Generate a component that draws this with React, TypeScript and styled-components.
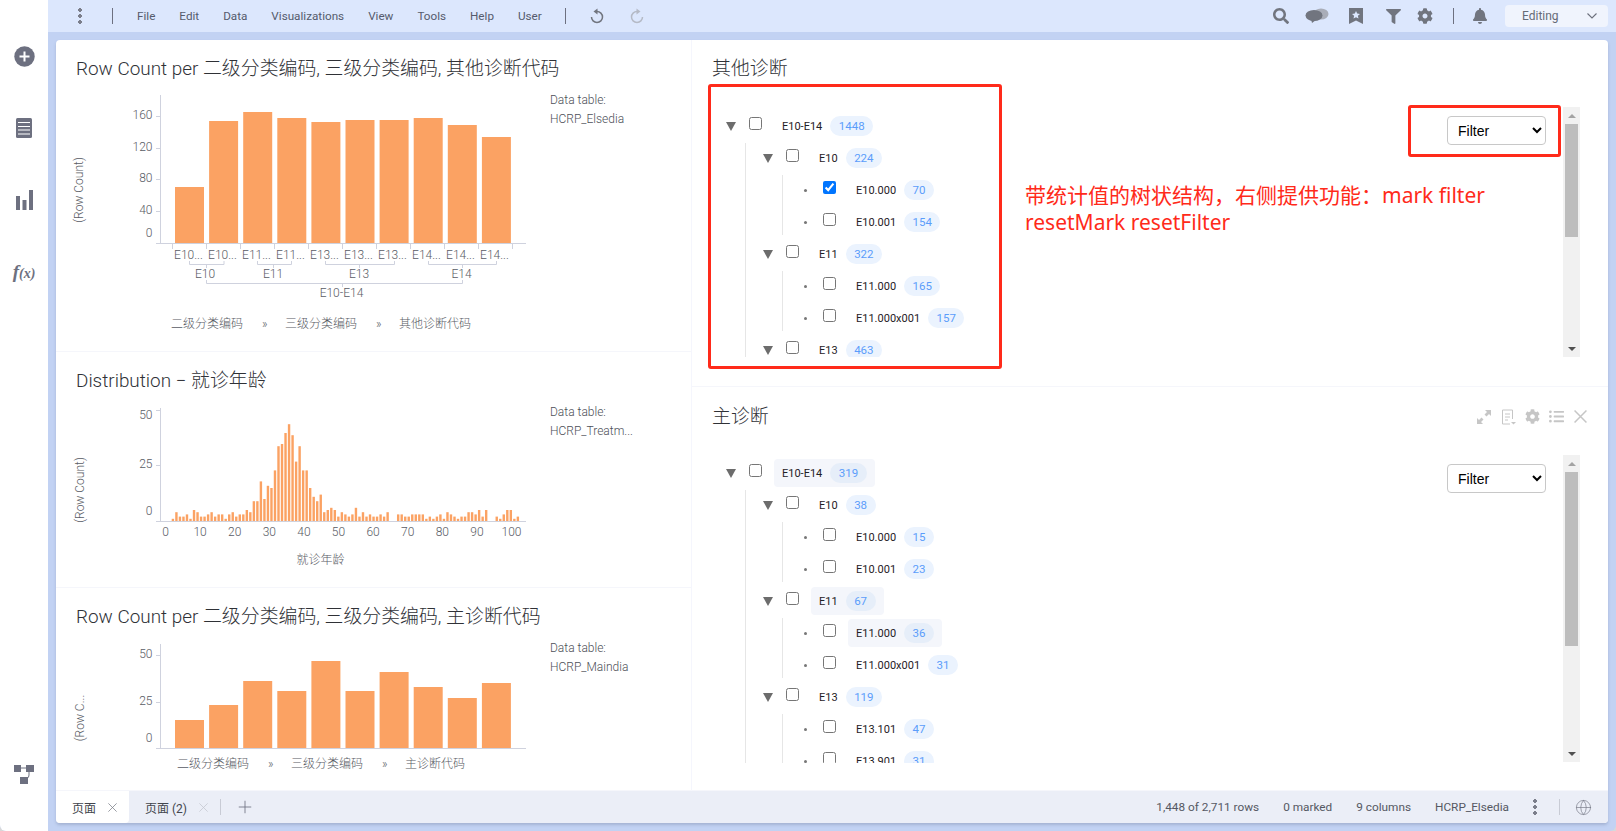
import React from "react";
import styled, { createGlobalStyle } from "styled-components";
import { FaSearch, FaFilter, FaCog, FaBell, FaListUl } from "react-icons/fa";
import { Globe, Plus } from "lucide-react";

const FONT = `Roboto, "Noto Sans CJK SC", sans-serif`;
const BAR = "#fba263";
const AXIS = "#cfd2de";

const Global = createGlobalStyle`
  html, body { margin: 0; padding: 0; height: 100%; overflow: hidden; }
  body { font-family: ${FONT}; background: #d8d8d8; }
  * { box-sizing: border-box; }
`;

const Shell = styled.div`
  display: grid;
  grid-template-columns: 48px 1fr;
  width: 1616px;
  height: 831px;
  background: #c2d2f3;
  border-radius: 0 0 6px 6px;
  overflow: hidden;
`;

const Rail = styled.nav`
  display: flex;
  flex-direction: column;
  align-items: center;
  gap: 50px;
  padding: 45px 0 46px;
  background: #fff;
  color: #6d7080;
`;

const RailIcon = styled.div`
  width: 22px;
  height: 22px;
  display: flex;
  align-items: center;
  justify-content: center;
`;

const RailBottom = styled(RailIcon)`
  margin-top: auto;
`;

const FxLabel = styled.span`
  font: italic 700 19px "Liberation Serif", serif;
  color: #6d7080;
  white-space: nowrap;
`;

const FxArg = styled.span`
  font-size: 14px;
`;

const Main = styled.div`
  display: flex;
  flex-direction: column;
  min-width: 0;
`;

const Toolbar = styled.header`
  height: 32px;
  flex: none;
  display: flex;
  align-items: center;
  padding: 0 8px 0 30px;
  background: #dce7fd;
  color: #555b6c;
`;

const Dots = styled.span`
  width: 4px;
  height: 16px;
  flex: none;
  background: radial-gradient(circle at 2px 2px, #7b7e8b 1.7px, transparent 2px) 0 0 / 4px 6px repeat-y;
`;

const Rule = styled.span<{ $ml: number }>`
  width: 1px;
  height: 16px;
  flex: none;
  margin-left: ${(p) => p.$ml}px;
  background: #6d7080;
`;

const Menu = styled.div`
  display: flex;
  gap: 24px;
  margin-left: 24px;
`;

const MenuItem = styled.span`
  font-size: 11.7px;
  color: #555b6c;
`;

const Slot = styled.span<{ $w: number; $ml: number; $color?: string }>`
  width: ${(p) => p.$w}px;
  flex: none;
  margin-left: ${(p) => p.$ml}px;
  display: flex;
  align-items: center;
  justify-content: center;
  color: ${(p) => p.$color || "#71757f"};
`;

const RightTools = styled.div`
  margin-left: auto;
  display: flex;
  align-items: center;
`;

const ModeBox = styled.div`
  width: 103px;
  height: 22px;
  margin-left: 17px;
  display: flex;
  align-items: center;
  justify-content: space-between;
  padding: 0 11px 0 17px;
  background: #f0f4fd;
  border-radius: 4px;
  font-size: 12px;
  color: #666b77;
`;

const CanvasWrap = styled.div`
  flex: 1;
  min-height: 0;
  padding: 8px;
`;

const Canvas = styled.main`
  position: relative;
  height: 100%;
  display: flex;
  flex-direction: column;
  background: #fff;
  border-radius: 4px;
  overflow: hidden;
  box-shadow: 0 2px 3px rgba(80, 90, 120, 0.25);
`;

const Content = styled.div`
  flex: 1;
  min-height: 0;
  display: grid;
  grid-template-columns: 636px 1fr;
`;

const LeftColumn = styled.section`
  display: flex;
  flex-direction: column;
  border-right: 1px solid #f5f6fd;
`;

const RightColumn = styled.section`
  display: flex;
  flex-direction: column;
`;

const ChartPanel = styled.article<{ $h: number }>`
  height: ${(p) => p.$h}px;
  flex: none;
  border-bottom: 1px solid #f5f6fb;
`;

const TitleRow = styled.div<{ $pt?: number }>`
  display: flex;
  align-items: center;
  justify-content: space-between;
  padding: ${(p) => p.$pt ?? 16}px 20px 0;
  height: 42px;
`;

const Title = styled.h2`
  margin: 0;
  font: 300 18.9px/26px ${FONT};
  color: #2f3136;
  white-space: nowrap;
`;

const ChartRow = styled.div`
  display: flex;
  padding-left: 14px;
`;

const ChartSvg = styled.svg`
  flex: none;
  display: block;
`;

const Legend = styled.div`
  margin-left: 4px;
  padding-top: 9px;
  font: 300 12px/19px ${FONT};
  color: #4d5058;
`;

const LegendLine = styled.div`
  white-space: nowrap;
`;

const AxisText = styled.text`
  font: 300 12px ${FONT};
  fill: #585b64;
`;

const TreePanel = styled.article<{ $h: number }>`
  height: ${(p) => p.$h}px;
  flex: none;
  border-bottom: 1px solid #f5f6fb;
`;

const HeaderIcons = styled.div`
  display: flex;
  align-items: center;
  gap: 8px;
  color: #c6c6c6;
`;

const HeaderIcon = styled.span`
  width: 16px;
  height: 16px;
  display: flex;
  align-items: center;
  justify-content: center;
`;

const PanelBody = styled.div`
  display: flex;
  align-items: flex-start;
`;

const TreeView = styled.div<{ $h: number }>`
  flex: 1;
  height: ${(p) => p.$h}px;
  margin-top: 28px;
  padding-left: 32px;
  overflow: hidden;
`;

const FilterSelect = styled.select<{ $mt: number }>`
  width: 99px;
  height: 29px;
  margin: ${(p) => p.$mt}px 17px 0 0;
  padding: 0 6px;
  flex: none;
  background: #fff;
  border: 1px solid #c8c8c8;
  border-radius: 4px;
  font: 14px "Liberation Sans", sans-serif;
  color: #000;
`;

const Scrollbar = styled.div<{ $mt: number; $h: number }>`
  width: 17px;
  height: ${(p) => p.$h}px;
  margin: ${(p) => p.$mt}px 28px 0 0;
  flex: none;
  display: flex;
  flex-direction: column;
  align-items: center;
  background: #f1f1f1;
`;

const ScrollArrow = styled.span<{ $down?: boolean }>`
  height: 17px;
  flex: none;
  display: flex;
  align-items: center;
  &::before {
    content: "";
    border-left: 4px solid transparent;
    border-right: 4px solid transparent;
    ${(p) => (p.$down ? "border-top: 4px solid #505050;" : "border-bottom: 4px solid #a3a3a3;")}
  }
`;

const ScrollThumb = styled.span<{ $h: number }>`
  width: 13px;
  height: ${(p) => p.$h}px;
  flex: none;
  background: #bdbdbd;
`;

const ScrollFill = styled.span`
  flex: 1;
`;

const Row = styled.div`
  height: 32px;
  display: flex;
  align-items: center;
`;

const Toggle = styled.span`
  width: 14px;
  flex: none;
  display: flex;
  justify-content: center;
  &::before {
    content: "";
    border-left: 5px solid transparent;
    border-right: 5px solid transparent;
    border-top: 9px solid #6c6c6c;
  }
`;

const Bullet = styled.span`
  width: 14px;
  flex: none;
  display: flex;
  justify-content: center;
  &::before {
    content: "";
    width: 3px;
    height: 3px;
    border-radius: 50%;
    background: #777;
  }
`;

const Check = styled.input`
  width: 13px;
  height: 13px;
  margin: 0 0 5px 11px;
  flex: none;
`;

const NodeLabel = styled.div<{ $hot?: boolean }>`
  height: 28px;
  margin-left: 12px;
  padding: 0 8px;
  display: flex;
  align-items: center;
  gap: 8px;
  border-radius: 4px;
  background: ${(p) => (p.$hot ? "#f4f6fb" : "transparent")};
`;

const NodeText = styled.span`
  font: 400 11px ${FONT};
  color: #1f2126;
  white-space: nowrap;
`;

const Badge = styled.span<{ $hot?: boolean }>`
  height: 20px;
  padding: 0 8.5px;
  display: flex;
  align-items: center;
  border-radius: 10px;
  font: 400 11.5px ${FONT};
  color: #5b9dfb;
  background: ${(p) => (p.$hot ? "#e6eef9" : "#ebf3fe")};
`;

const Children = styled.div`
  position: relative;
  margin-left: 21px;
  padding-left: 16px;
  &::before {
    content: "";
    position: absolute;
    left: 0;
    top: 1px;
    bottom: 3px;
    width: 1px;
    background: #e6e6e6;
  }
`;

const Bottom = styled.footer`
  height: 32px;
  flex: none;
  display: flex;
  align-items: center;
  background: #ebeef7;
  padding-right: 16px;
`;

const Tab = styled.div<{ $active?: boolean }>`
  height: 32px;
  display: flex;
  align-items: center;
  gap: 12px;
  padding-left: 16px;
  border-radius: 0 0 4px 4px;
  background: ${(p) => (p.$active ? "#fff" : "transparent")};
  color: ${(p) => (p.$active ? "#7a7d87" : "#c3c6cf")};
  width: ${(p) => (p.$active ? "73px" : "auto")};
`;

const TabText = styled.span`
  font: 400 12px ${FONT};
  color: #42454d;
  white-space: nowrap;
`;

const TabRule = styled.span`
  width: 1px;
  height: 16px;
  margin-left: 12px;
  background: #c8cbd5;
`;

const TabAdd = styled.span`
  margin-left: 14px;
  display: flex;
  color: #6d7080;
`;

const StatusGroup = styled.div`
  margin-left: auto;
  display: flex;
  align-items: center;
  gap: 24px;
`;

const StatusText = styled.span`
  font: 400 11.8px ${FONT};
  color: #555863;
  white-space: nowrap;
`;

const StatusRule = styled.span`
  width: 1px;
  height: 16px;
  margin-left: 22px;
  background: #c8cbd5;
`;

const GlobeSlot = styled.span`
  margin-left: 15px;
  display: flex;
  color: #7b7e8b;
`;

const RedBox = styled.div<{ $x: number; $y: number; $w: number; $h: number }>`
  position: absolute;
  left: ${(p) => p.$x}px;
  top: ${(p) => p.$y}px;
  width: ${(p) => p.$w}px;
  height: ${(p) => p.$h}px;
  border: 3px solid #ff2a1a;
  border-radius: 3px;
  pointer-events: none;
`;

const RedNote = styled.div`
  position: absolute;
  left: 969px;
  top: 142px;
  width: 500px;
  font: 400 21px/27px "Noto Sans", "Noto Sans CJK SC", sans-serif;
  color: #ff2a1a;
`;

type Node = { label: string; count: number; hot?: boolean; checked?: boolean; kids?: Node[] };

const treeOne: Node[] = [
  {
    label: "E10-E14",
    count: 1448,
    kids: [
      {
        label: "E10",
        count: 224,
        kids: [
          { label: "E10.000", count: 70, checked: true },
          { label: "E10.001", count: 154 },
        ],
      },
      {
        label: "E11",
        count: 322,
        kids: [
          { label: "E11.000", count: 165 },
          { label: "E11.000x001", count: 157 },
        ],
      },
      { label: "E13", count: 463, kids: [] },
    ],
  },
];

const treeTwo: Node[] = [
  {
    label: "E10-E14",
    count: 319,
    hot: true,
    kids: [
      {
        label: "E10",
        count: 38,
        kids: [
          { label: "E10.000", count: 15 },
          { label: "E10.001", count: 23 },
        ],
      },
      {
        label: "E11",
        count: 67,
        hot: true,
        kids: [
          { label: "E11.000", count: 36, hot: true },
          { label: "E11.000x001", count: 31 },
        ],
      },
      {
        label: "E13",
        count: 119,
        kids: [
          { label: "E13.101", count: 47 },
          { label: "E13.901", count: 31 },
        ],
      },
    ],
  },
];

function TreeNode({ node }: { node: Node }) {
  return (
    <div>
      <Row>
        {node.kids ? <Toggle /> : <Bullet />}
        <Check type="checkbox" defaultChecked={node.checked} />
        <NodeLabel $hot={node.hot}>
          <NodeText>{node.label}</NodeText>
          <Badge $hot={node.hot}>{node.count}</Badge>
        </NodeLabel>
      </Row>
      {node.kids && node.kids.length > 0 && (
        <Children>
          {node.kids.map((k) => (
            <TreeNode key={k.label} node={k} />
          ))}
        </Children>
      )}
    </div>
  );
}

function Axes({ top, bottom }: { top: number; bottom: number }) {
  return (
    <g stroke={AXIS} strokeWidth="1" fill="none">
      <path d={`M160.5 ${top}V${bottom}.5`} />
      <path d={`M156 ${bottom}.5H526`} />
    </g>
  );
}

const YLabel = ({ x, y, children }: { x: number; y: number; children: string }) => (
  <AxisText x={x} y={y} textAnchor="middle" dominantBaseline="middle" transform={`rotate(-90 ${x} ${y})`}>
    {children}
  </AxisText>
);

const YTicks = ({ items }: { items: [string, number, number?][] }) => (
  <>
    {items.map(([t, y, ty]) => (
      <React.Fragment key={t}>
        <AxisText x={152.5} y={y} textAnchor="end" dominantBaseline="middle">
          {t}
        </AxisText>
        {ty !== undefined && <path d={`M156 ${ty}.5H160`} stroke={AXIS} />}
      </React.Fragment>
    ))}
  </>
);

const barsOne = [187, 121, 112, 118, 122, 120, 120, 118, 125, 137];
const catOne = ["E10...", "E10...", "E11...", "E11...", "E13...", "E13...", "E13...", "E14...", "E14...", "E14..."];

function ChartOne() {
  return (
    <ChartSvg width="476" height="260" viewBox="70 82 476 260">
      <Axes top={95} bottom={243} />
      {barsOne.map((t, i) => (
        <rect key={i} x={175 + i * 34.1} y={t} width={29} height={243 - t} fill={BAR} />
      ))}
      <YTicks items={[["160", 116, 116], ["120", 148, 148], ["80", 179, 179], ["40", 211, 211], ["0", 234]]} />
      <YLabel x={80} y={190}>(Row Count)</YLabel>
      <g stroke={AXIS} fill="none">
        {Array.from({ length: 11 }, (_, i) => (
          <path key={i} d={`M${172.5 + i * 34} 243V249`} />
        ))}
        <path d="M189.5 261V264.5H224V261M206.5 264.5V268" />
        <path d="M257.5 261V264.5H291.5V261M273.5 264.5V268" />
        <path d="M325.5 261V264.5H394.5V261M359.5 264.5V268" />
        <path d="M428.5 261V264.5H496.5V261M462.5 264.5V268" />
        <path d="M206.5 280V283.5H462.5V280M342.5 283.5V287" />
      </g>
      {catOne.map((c, i) => (
        <AxisText key={i} x={188.5 + i * 34} y={256} textAnchor="middle" dominantBaseline="middle">
          {c}
        </AxisText>
      ))}
      {[["E10", 205], ["E11", 273], ["E13", 359], ["E14", 461.5]].map(([t, x]) => (
        <AxisText key={t} x={x} y={275} textAnchor="middle" dominantBaseline="middle">
          {t}
        </AxisText>
      ))}
      <AxisText x={341.5} y={294} textAnchor="middle" dominantBaseline="middle">E10-E14</AxisText>
      <AxisText x={171} y={325} dominantBaseline="middle">二级分类编码</AxisText>
      <AxisText x={262} y={325} dominantBaseline="middle">»</AxisText>
      <AxisText x={285} y={325} dominantBaseline="middle">三级分类编码</AxisText>
      <AxisText x={376} y={325} dominantBaseline="middle">»</AxisText>
      <AxisText x={399} y={325} dominantBaseline="middle">其他诊断代码</AxisText>
    </ChartSvg>
  );
}

const ages = [
  0, 0, 1, 4, 2, 2, 3, 1, 5, 4, 2, 2, 3, 4, 2, 3, 3, 1, 3, 4, 2, 3, 3, 5, 4, 9, 9, 18, 10, 16, 15, 23, 34, 35, 40, 44,
  39, 27, 34, 23, 23, 15, 11, 9, 12, 4, 5, 6, 5, 2, 4, 3, 2, 3, 6, 2, 4, 2, 3, 2, 2, 3, 2, 4, 0, 0, 3, 3, 2, 2, 3, 3,
  3, 3, 1, 2, 1, 2, 3, 1, 4, 3, 2, 1, 2, 2, 4, 4, 3, 5, 2, 5, 0, 0, 2, 1, 3, 5, 5, 1, 2,
];

function ChartTwo() {
  return (
    <ChartSvg width="476" height="180" viewBox="70 394 476 180">
      <Axes top={408} bottom={521} />
      {ages.map((v, i) =>
        v ? (
          <rect key={i} x={171.7 + (i - 2) * 3.52} y={521 - v * 2.2} width={2.4} height={v * 2.2} fill={BAR} />
        ) : null
      )}
      <YTicks items={[["50", 416, 410], ["25", 465, 465], ["0", 512]]} />
      <YLabel x={80.5} y={490}>(Row Count)</YLabel>
      {Array.from({ length: 11 }, (_, i) => (
        <AxisText key={i} x={165.5 + i * 34.6} y={533} textAnchor="middle" dominantBaseline="middle">
          {i * 10}
        </AxisText>
      ))}
      <AxisText x={320.5} y={560.5} textAnchor="middle" dominantBaseline="middle">就诊年龄</AxisText>
    </ChartSvg>
  );
}

const barsThree = [720, 705, 681, 691, 661, 691, 672, 687, 698, 683];

function ChartThree() {
  return (
    <ChartSvg width="476" height="145" viewBox="70 630 476 145">
      <Axes top={644} bottom={748} />
      {barsThree.map((t, i) => (
        <rect key={i} x={175 + i * 34.1} y={t} width={29} height={748 - t} fill={BAR} />
      ))}
      <YTicks items={[["50", 655, 655], ["25", 702, 702], ["0", 739]]} />
      <YLabel x={80.5} y={718}>(Row C...</YLabel>
      <AxisText x={177} y={765} dominantBaseline="middle">二级分类编码</AxisText>
      <AxisText x={268} y={765} dominantBaseline="middle">»</AxisText>
      <AxisText x={291} y={765} dominantBaseline="middle">三级分类编码</AxisText>
      <AxisText x={382} y={765} dominantBaseline="middle">»</AxisText>
      <AxisText x={405} y={765} dominantBaseline="middle">主诊断代码</AxisText>
    </ChartSvg>
  );
}

const FilterControl = ({ mt }: { mt: number }) => (
  <FilterSelect $mt={mt} defaultValue="Filter">
    <option>Filter</option>
    <option>Mark</option>
  </FilterSelect>
);

const Bar = ({ mt, h, thumb }: { mt: number; h: number; thumb: number }) => (
  <Scrollbar $mt={mt} $h={h}>
    <ScrollArrow />
    <ScrollThumb $h={thumb} />
    <ScrollFill />
    <ScrollArrow $down />
  </Scrollbar>
);

const Cross = ({ size, weight }: { size: number; weight: number }) => (
  <svg width={size} height={size} viewBox="0 0 12 12" fill="none" stroke="currentColor" strokeWidth={weight}>
    <path d="M.5.5l11 11M11.500.5l-11 11" />
  </svg>
);

const Undo = ({ flip }: { flip?: boolean }) => (
  <svg width="14" height="16" viewBox="0 0 14 16" transform={flip ? "scale(-1 1)" : undefined}>
    <path d="M7 3.500a5.500 5.500 0 1 1-5.500 5.500" fill="none" stroke="currentColor" strokeWidth="1.5" />
    <path d="M7.500.5L3.500 3.500l4 3z" fill="currentColor" />
  </svg>
);

export default function App() {
  return (
    <>
      <Global />
      <Shell>
        <Rail>
          <RailIcon>
            <svg width="21" height="21" viewBox="0 0 21 21">
              <circle cx="10.5" cy="10.5" r="10.2" fill="currentColor" />
              <path d="M10.5 5.5v10M5.5 10.5h10" stroke="#fff" strokeWidth="2" />
            </svg>
          </RailIcon>
          <RailIcon>
            <svg width="16" height="20" viewBox="0 0 16 20">
              <rect width="16" height="20" rx="1.5" fill="currentColor" />
              <path d="M2 4.500h12M2 8.500h12M2 12h12M2 16h12" stroke="#fff" strokeWidth="1.2" />
            </svg>
          </RailIcon>
          <RailIcon>
            <svg width="17" height="20" viewBox="0 0 17 20">
              <path d="M0 6h4v14H0zM6.500 10h4v10h-4zM13 0h4v20h-4z" fill="currentColor" />
            </svg>
          </RailIcon>
          <RailIcon>
            <FxLabel>
              f<FxArg>(x)</FxArg>
            </FxLabel>
          </RailIcon>
          <RailBottom>
            <svg width="21" height="21" viewBox="0 0 21 21">
              <path d="M0 1h7v7H0zM12 1h8v7h-8zM6 13h8v7H6z" fill="currentColor" />
              <path d="M7 4h5M15 8v3q0 3-2 3" stroke="currentColor" fill="none" />
            </svg>
          </RailBottom>
        </Rail>
        <Main>
          <Toolbar>
            <Dots />
            <Rule $ml={30} />
            <Menu>
              {["File", "Edit", "Data", "Visualizations", "View", "Tools", "Help", "User"].map((m) => (
                <MenuItem key={m}>{m}</MenuItem>
              ))}
            </Menu>
            <Rule $ml={23} />
            <Slot $w={16} $ml={23}>
              <Undo />
            </Slot>
            <Slot $w={16} $ml={24.5} $color="#b5bac6">
              <Undo flip />
            </Slot>
            <RightTools>
              <Slot $w={18} $ml={0}>
                <FaSearch size={16} />
              </Slot>
              <Slot $w={24} $ml={15}>
                <svg width="24" height="16" viewBox="0 0 24 16">
                  <ellipse cx="16" cy="6" rx="7.500" ry="5.500" fill="#a9adb8" />
                  <ellipse cx="9" cy="7.500" rx="8.500" ry="5.500" fill="currentColor" />
                  <path d="M6 11l1 4 4-3z" fill="currentColor" />
                </svg>
              </Slot>
              <Slot $w={14} $ml={20}>
                <svg width="14" height="16" viewBox="0 0 14 16">
                  <path d="M0 0h14v16l-7-3.500L0 16z" fill="currentColor" />
                  <path d="M7 3l1.200 2.600 2.800.3-2.100 1.900.6 2.800L7 9.200l-2.500 1.400.6-2.800L3 5.900l2.800-.3z" fill="#dce7fd" />
                </svg>
              </Slot>
              <Slot $w={16} $ml={22}>
                <FaFilter size={15} />
              </Slot>
              <Slot $w={16} $ml={16}>
                <FaCog size={16} />
              </Slot>
              <Rule $ml={20} />
              <Slot $w={16} $ml={18}>
                <FaBell size={16} />
              </Slot>
              <ModeBox>
                Editing
                <svg width="10" height="6" viewBox="0 0 10 6" fill="none" stroke="#6c707c" strokeWidth="1.1">
                  <path d="M.5.5L5 5l4.500-4.500" />
                </svg>
              </ModeBox>
            </RightTools>
          </Toolbar>
          <CanvasWrap>
            <Canvas>
              <Content>
                <LeftColumn>
                  <ChartPanel $h={312}>
                    <TitleRow $pt={15}>
                      <Title>Row Count per 二级分类编码, 三级分类编码, 其他诊断代码</Title>
                    </TitleRow>
                    <ChartRow>
                      <ChartOne />
                      <Legend>
                        <LegendLine>Data table:</LegendLine>
                        <LegendLine>HCRP_Elsedia</LegendLine>
                      </Legend>
                    </ChartRow>
                  </ChartPanel>
                  <ChartPanel $h={236}>
                    <TitleRow>
                      <Title>Distribution − 就诊年龄</Title>
                    </TitleRow>
                    <ChartRow>
                      <ChartTwo />
                      <Legend>
                        <LegendLine>Data table:</LegendLine>
                        <LegendLine>HCRP_Treatm...</LegendLine>
                      </Legend>
                    </ChartRow>
                  </ChartPanel>
                  <ChartPanel $h={203}>
                    <TitleRow>
                      <Title>Row Count per 二级分类编码, 三级分类编码, 主诊断代码</Title>
                    </TitleRow>
                    <ChartRow>
                      <ChartThree />
                      <Legend>
                        <LegendLine>Data table:</LegendLine>
                        <LegendLine>HCRP_Maindia</LegendLine>
                      </Legend>
                    </ChartRow>
                  </ChartPanel>
                </LeftColumn>
                <RightColumn>
                  <TreePanel $h={347}>
                    <TitleRow $pt={15}>
                      <Title>其他诊断</Title>
                    </TitleRow>
                    <PanelBody>
                      <TreeView $h={247}>
                        {treeOne.map((n) => (
                          <TreeNode key={n.label} node={n} />
                        ))}
                      </TreeView>
                      <FilterControl mt={34} />
                      <Bar mt={25} h={250} thumb={113} />
                    </PanelBody>
                  </TreePanel>
                  <TreePanel $h={404}>
                    <TitleRow $pt={17}>
                      <Title>主诊断</Title>
                      <HeaderIcons>
                        <HeaderIcon>
                          <svg width="14" height="14" viewBox="0 0 14 14" fill="currentColor">
                            <path d="M8 0h6v6l-2-2-2.500 2.500L7.500 4.500 10 2zM0 14V8l2 2 2.500-2.500 2 2L4 12l2 2z" />
                          </svg>
                        </HeaderIcon>
                        <HeaderIcon>
                          <svg width="15" height="16" viewBox="0 0 15 16" fill="none" stroke="currentColor">
                            <path d="M11.500 10V1H1.500v14H9M4 5h5M4 8h5M4 11h3" />
                            <path d="M10 13h5l-2.500 2.500z" fill="currentColor" stroke="none" />
                          </svg>
                        </HeaderIcon>
                        <HeaderIcon>
                          <FaCog size={15} />
                        </HeaderIcon>
                        <HeaderIcon>
                          <FaListUl size={15} />
                        </HeaderIcon>
                        <HeaderIcon>
                          <Cross size={13} weight={1.4} />
                        </HeaderIcon>
                      </HeaderIcons>
                    </TitleRow>
                    <PanelBody>
                      <TreeView $h={306}>
                        {treeTwo.map((n) => (
                          <TreeNode key={n.label} node={n} />
                        ))}
                      </TreeView>
                      <FilterControl mt={35} />
                      <Bar mt={26} h={307} thumb={174} />
                    </PanelBody>
                  </TreePanel>
                </RightColumn>
              </Content>
              <Bottom>
                <Tab $active>
                  <TabText>页面</TabText>
                  <Cross size={9} weight={1} />
                </Tab>
                <Tab>
                  <TabText>页面 (2)</TabText>
                  <Cross size={9} weight={1} />
                </Tab>
                <TabRule />
                <TabAdd>
                  <Plus size={20} strokeWidth={1} />
                </TabAdd>
                <StatusGroup>
                  <StatusText>1,448 of 2,711 rows</StatusText>
                  <StatusText>0 marked</StatusText>
                  <StatusText>9 columns</StatusText>
                  <StatusText>HCRP_Elsedia</StatusText>
                  <Dots />
                </StatusGroup>
                <StatusRule />
                <GlobeSlot>
                  <Globe size={17} strokeWidth={1} />
                </GlobeSlot>
              </Bottom>
              <RedBox $x={652} $y={44} $w={294} $h={285} />
              <RedBox $x={1352} $y={65} $w={153} $h={52} />
              <RedNote>
                带统计值的树状结构，右侧提供功能：mark filter
                <br />
                resetMark resetFilter
              </RedNote>
            </Canvas>
          </CanvasWrap>
        </Main>
      </Shell>
    </>
  );
}
